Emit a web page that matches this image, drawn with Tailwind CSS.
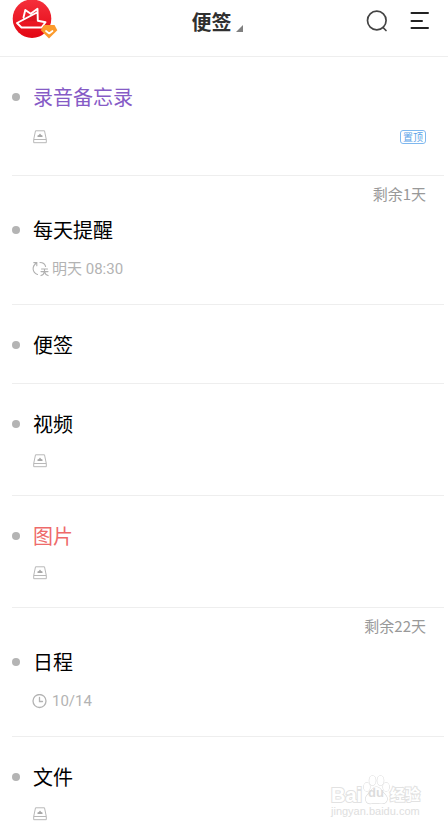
<!DOCTYPE html>
<html lang="zh-CN">
<head>
<meta charset="utf-8">
<meta name="viewport" content="width=device-width, initial-scale=1">
<title>便签</title>
<script src="https://cdn.jsdelivr.net/npm/@tailwindcss/browser@4"></script>
</head>
<body class="relative min-h-screen overflow-x-hidden bg-white font-['Noto_Sans_CJK_SC',sans-serif] text-black antialiased">
<svg class="hidden" aria-hidden="true">
  <symbol id="drive" viewBox="0 0 14 14">
    <g fill="none" stroke="#b8b8b8" stroke-width="1" stroke-linejoin="round">
      <path d="M2.500 .8h9L13.300 9.500v3.200H.7V9.500z"/>
      <path d="M.7 9.500h12.600"/>
    </g>
    <path d="M4.500 7V5.600l1.300-.6L7 3.600l1.200 1.400 1.300.6V7z" fill="#a8a8a8"/>
  </symbol>
</svg>

<header class="grid h-[57px] grid-cols-[1fr_auto_1fr] items-start border-b border-[#eeeeee] pr-[18px] pl-3">
  <button type="button" aria-label="账户" class="w-fit">
    <svg class="block h-10 w-[46px]" viewBox="0 0 46 40">
      <defs><linearGradient id="red" x1="0" y1="0" x2="0" y2="1"><stop offset="0" stop-color="#f5303c"/><stop offset="1" stop-color="#e30613"/></linearGradient></defs>
      <circle cx="20" cy="18.700" r="19.300" fill="url(#red)"/>
      <path d="M10 21.500 25 12v9z" fill="#c90d1a" opacity=".5"/>
      <g fill="none" stroke="#fff" stroke-width="1.900" stroke-linejoin="round" stroke-linecap="round">
        <path d="M11.500 17.500 13.300 10l5.400 3.800M19 13.500l6.500-4.800.3 12 7.700 1.500-4 5.300H9.500l-4.500-4.500L25 12.500"/>
      </g>
      <path d="M32 25h10.500l2.800 5.200-8.300 8.300-8.200-8.300z" fill="#fb9a2c"/>
      <path d="m34 31 3.200 2.500 3.300-2.500" fill="none" stroke="#fff" stroke-width="1.700" stroke-linecap="round" stroke-linejoin="round"/>
    </svg>
  </button>
  <button type="button" class="flex items-end pt-2 pr-2">
    <h1 class="text-xl leading-7 font-bold text-[#303030]">便签</h1>
    <svg class="mb-1 ml-1 size-[7px]" viewBox="0 0 7 7" aria-hidden="true"><path d="M7 0v7H0z" fill="#808080"/></svg>
  </button>
  <div class="flex justify-end gap-5 pt-[9px]">
    <button type="button" aria-label="搜索">
      <svg class="block size-6" viewBox="0 0 24 24" fill="none" stroke="#444" stroke-width="1.700" stroke-linecap="round"><circle cx="10.800" cy="11.500" r="9.300"/><path d="m17 18.500 3 3"/></svg>
    </button>
    <button type="button" aria-label="菜单">
      <svg class="block h-6 w-5" viewBox="0 0 20 24" fill="none" stroke="#222" stroke-width="2" stroke-linecap="round"><path d="M1.500 4H18M1.500 12h10.500M1.500 19H18"/></svg>
    </button>
  </div>
</header>

<main>
<ul class="mr-1 ml-3">
  <li class="border-b border-[#eeeeee] pt-[26px] pr-[18px] pb-7">
    <div class="flex items-center gap-[13px]"><span class="size-2 rounded-full bg-[#b4b4b4]"></span><h2 class="text-xl leading-7 text-[#865bc6]">录音备忘录</h2></div>
    <div class="mt-4 flex h-5 items-center justify-between pl-[21px]">
      <svg class="size-3.5" role="img" aria-label="附件"><use href="#drive"/></svg>
      <span class="rounded-[3px] border border-[#7fb8ef] px-0.5 text-[10px] leading-3 text-[#5ba3e8]">置顶</span>
    </div>
  </li>
  <li class="border-b border-[#eeeeee] pt-2 pr-[18px] pb-6">
    <p class="mb-3 text-right text-[15px] leading-5 text-[#999999]">剩余1天</p>
    <div class="flex items-center gap-[13px]"><span class="size-2 rounded-full bg-[#b4b4b4]"></span><h2 class="text-xl leading-7">每天提醒</h2></div>
    <div class="mt-[15px] mb-px flex h-5 items-center gap-[3px] pl-5 font-['Roboto','Noto_Sans_CJK_SC',sans-serif] text-[15px] text-[#b3b3b3]">
      <svg class="h-4 w-[17px]" viewBox="0 0 17 16" fill="none" stroke="#b0b0b0" stroke-width="1.100" stroke-linecap="round" aria-hidden="true"><path d="M5.500 13.500C.2 11.500-.5 5.500 4.500 2M1.800 1.600h3v3.200M8 1.500c3 0 5 1.600 5.600 4M9.500 8h6M9 10.600h7M12.500 8v2.600c-.3 2-1.500 3.200-3.500 4M12.600 10.800c.4 1.900 1.500 3.100 3.500 3.800"/></svg>
      <time>明天 08:30</time>
    </div>
  </li>
  <li class="border-b border-[#eeeeee] pt-[26px] pr-[18px] pb-6">
    <div class="flex items-center gap-[13px]"><span class="size-2 rounded-full bg-[#b4b4b4]"></span><h2 class="text-xl leading-7">便签</h2></div>
  </li>
  <li class="border-b border-[#eeeeee] pt-[26px] pr-[18px] pb-6">
    <div class="flex items-center gap-[13px]"><span class="size-2 rounded-full bg-[#b4b4b4]"></span><h2 class="text-xl leading-7">视频</h2></div>
    <div class="mt-[13px] flex h-5 items-center pl-[21px]"><svg class="size-3.5" role="img" aria-label="附件"><use href="#drive"/></svg></div>
  </li>
  <li class="border-b border-[#eeeeee] pt-[26px] pr-[18px] pb-6">
    <div class="flex items-center gap-[13px]"><span class="size-2 rounded-full bg-[#b4b4b4]"></span><h2 class="text-xl leading-7 text-[#ee6a6a]">图片</h2></div>
    <div class="mt-[13px] flex h-5 items-center pl-[21px]"><svg class="size-3.5" role="img" aria-label="附件"><use href="#drive"/></svg></div>
  </li>
  <li class="border-b border-[#eeeeee] pt-2 pr-[18px] pb-6">
    <p class="mb-3 text-right text-[15px] leading-5 text-[#999999]">剩余22天</p>
    <div class="flex items-center gap-[13px]"><span class="size-2 rounded-full bg-[#b4b4b4]"></span><h2 class="text-xl leading-7">日程</h2></div>
    <div class="mt-[15px] mb-px flex h-5 items-center gap-[5px] pl-5 font-['Roboto','Noto_Sans_CJK_SC',sans-serif] text-[15px] text-[#b3b3b3]">
      <svg class="size-[15px]" viewBox="0 0 15 15" fill="none" stroke="#b3b3b3" stroke-width="1.300" stroke-linecap="round" aria-hidden="true"><circle cx="7.500" cy="7" r="6.500"/><path d="M7.500 3.500v4h3"/></svg>
      <time>10/14</time>
    </div>
  </li>
  <li class="pt-[26px] pr-[18px]">
    <div class="flex items-center gap-[13px]"><span class="size-2 rounded-full bg-[#b4b4b4]"></span><h2 class="text-xl leading-7">文件</h2></div>
    <div class="mt-[13px] flex h-5 items-center pl-[21px]"><svg class="size-3.5" role="img" aria-label="附件"><use href="#drive"/></svg></div>
  </li>
</ul>
</main>

<div class="pointer-events-none absolute right-7 bottom-3 w-[89px] font-['Liberation_Sans','Noto_Sans_CJK_SC',sans-serif] text-white [-webkit-text-stroke:2px_#e2e2e2] [paint-order:stroke_fill]">
  <div class="flex items-end justify-between">
    <span class="text-xl leading-5 font-bold">Bai</span>
    <span class="relative block">
      <svg class="block h-[30px] w-[27px]" viewBox="0 0 27 30" fill="#fff" stroke="#dcdcdc" stroke-width="1.200" aria-hidden="true"><ellipse cx="3.900" cy="12" rx="3.100" ry="4.200"/><ellipse cx="9.500" cy="5.500" rx="3.200" ry="4.700"/><ellipse cx="17.500" cy="5.500" rx="3.200" ry="4.700"/><ellipse cx="23.100" cy="12" rx="3.100" ry="4.200"/><path d="M13.500 12c4 0 5 4.500 8.500 7.500 4 4 2 9-3 9-3 0-8-.5-11 0-5 .5-7-5-3.500-8.500C8 16.500 9 12 13.500 12z"/></svg>
      <span class="absolute inset-x-0 bottom-1 text-center text-[13px] leading-4 font-bold text-[#dcdcdc] [-webkit-text-stroke:0px]">du</span>
    </span>
    <span class="text-[15px] leading-5 font-bold">经验</span>
  </div>
  <div class="text-[11px] leading-3 whitespace-nowrap text-[#dedede] [-webkit-text-stroke:0px]">jingyan.baidu.com</div>
</div>
</body>
</html>
